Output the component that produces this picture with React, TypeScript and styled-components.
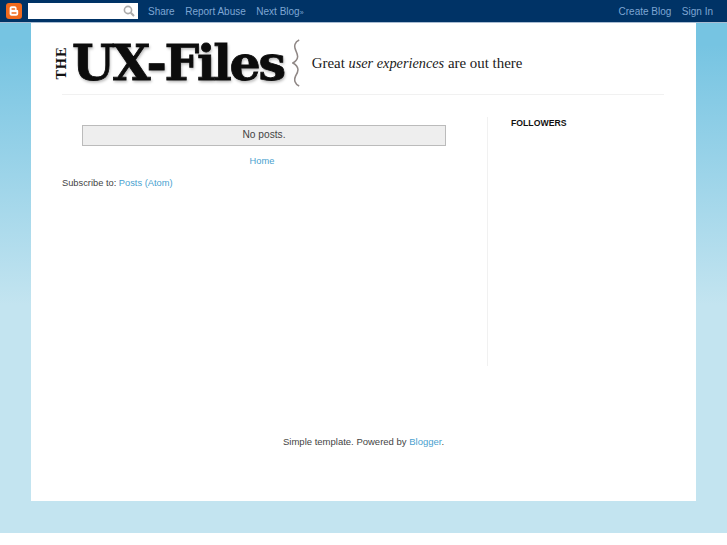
import React from 'react';
import styled, { createGlobalStyle } from 'styled-components';

const GlobalStyle = createGlobalStyle`
  html, body {
    margin: 0;
    padding: 0;
    background: #fff;
  }
  body {
    font-family: "Liberation Sans", Arial, sans-serif;
    font-size: 9.3px;
    color: #444;
  }
  a {
    color: #4a9fcf;
    text-decoration: none;
  }
`;

const Page = styled.div`
  width: 727px;
  height: 533px;
  overflow: hidden;
  background: linear-gradient(#76c4e2 45px, #c3e4f0 305px);
`;

const Navbar = styled.nav`
  height: 22px;
  border-bottom: 1px solid #a9bcd2;
  background: #003366;
  display: flex;
  align-items: center;
  padding: 0 14px 0 6px;
  font-size: 10px;
`;

const NavLink = styled.a`
  color: #7ea6d3;
  margin-left: 10.5px;
`;

const NavSearch = styled.div`
  width: 109.5px;
  height: 16px;
  margin-left: 6px;
  background: #fff;
  display: flex;
  align-items: center;
  justify-content: flex-end;
  padding-right: 3px;
  box-sizing: border-box;
`;

const NavSpacer = styled.div`
  flex: 1;
`;

const Arrows = styled.span`
  font-size: 7px;
`;

const Card = styled.main`
  width: 665px;
  height: 478px;
  margin-left: 31px;
  background: #fff;
  box-sizing: border-box;
  padding: 11px 32px 0 23px;
`;

const Logo = styled.header`
  display: flex;
  align-items: center;
  height: 60px;
  white-space: nowrap;
`;

const LogoThe = styled.span`
  writing-mode: vertical-rl;
  transform: rotate(180deg);
  font-family: "DejaVu Serif", serif;
  font-weight: 700;
  font-size: 12.5px;
  line-height: 15px;
  letter-spacing: 0.6px;
  color: #111;
  margin: -1px 3px 0 0;
`;

const LogoTitle = styled.h1`
  margin: -3px 0 0 0;
  font-family: "DejaVu Serif", serif;
  font-weight: 700;
  font-size: 49px;
  line-height: 60px;
  letter-spacing: -2.3px;
  color: #0c0c0c;
  -webkit-text-stroke: 0.8px #0c0c0c;
  text-shadow: 1px 2px 3px rgba(0, 0, 0, 0.3);
`;

const Brace = styled.svg`
  margin: -2px 0 0 8px;
  flex: none;
`;

const Tagline = styled.p`
  margin: -2px 0 0 11px;
  font-family: "Liberation Serif", serif;
  font-size: 14.9px;
  color: #1a1a1a;

  em {
    font-size: 14.3px;
  }
`;

const Rule = styled.hr`
  margin: 0 0 0 8px;
  height: 1px;
  border: 0;
  background: #f1f1f1;
`;

const Columns = styled.div`
  display: flex;
  margin-top: 22px;
  height: 249px;
`;

const PostsColumn = styled.section`
  width: 433px;
  padding-left: 8px;
  box-sizing: border-box;
`;

const Status = styled.div`
  width: 364px;
  height: 21px;
  margin: 8px 0 0 20px;
  box-sizing: border-box;
  background: #eeeeee;
  border: 1px solid #bbbbbb;
  text-align: center;
  font-size: 10.2px;
  line-height: 17px;
`;

const Pager = styled.div`
  width: 400px;
  text-align: center;
  margin-top: 9px;
  line-height: 13px;
`;

const Subscribe = styled.div`
  margin-top: 9px;
  line-height: 13px;
`;

const Sidebar = styled.aside`
  flex: 1;
  border-left: 1px solid #f1f1f1;
  padding-left: 23px;
`;

const SidebarTitle = styled.h2`
  margin: 0;
  font-size: 8.7px;
  line-height: 13px;
  color: #111;
  text-transform: uppercase;
`;

const Footer = styled.footer`
  margin-top: 69px;
  padding-left: 229px;
  font-size: 9.5px;
  line-height: 13px;
`;

const App: React.FC = () => {
  return (
    <Page>
      <GlobalStyle />
      <Navbar>
        <svg width="16" height="16" viewBox="0 0 16 16">
          <rect width="16" height="16" rx="3" fill="#f06a1d" />
          <path
            d="M5.6 3.2h3c1.1 0 2 .9 2 2v1.3c0 .4.3.6.6.6.6 0 1 .4 1 1v2.7c0 1.1-.9 2-2 2H5.6c-1.1 0-2-.9-2-2V5.2c0-1.1.9-2 2-2z"
            fill="#fff"
          />
          <path d="M6 6h2.6M6 10h4" stroke="#f06a1d" strokeWidth="1.3" strokeLinecap="round" />
        </svg>
        <NavSearch>
          <svg width="12" height="12" viewBox="0 0 12 12" fill="none" stroke="#aaa" strokeWidth="1.6">
            <circle cx="5" cy="5" r="3.6" />
            <path d="M7.8 7.8 11 11" strokeWidth="2" />
          </svg>
        </NavSearch>
        <NavLink href="#">Share</NavLink>
        <NavLink href="#">Report Abuse</NavLink>
        <NavLink href="#">
          Next Blog<Arrows>»</Arrows>
        </NavLink>
        <NavSpacer />
        <NavLink href="#">Create Blog</NavLink>
        <NavLink href="#">Sign In</NavLink>
      </Navbar>
      <Card>
        <Logo>
          <LogoThe>THE</LogoThe>
          <LogoTitle>UX-Files</LogoTitle>
          <Brace
            width="9"
            height="48"
            viewBox="0 0 10 48"
            preserveAspectRatio="none"
            fill="none"
            stroke="#8f8785"
            strokeWidth="1.7"
          >
            <path d="M8 1C3 3 2 7 4 11c2 4 5 9-3 13 8 4 6 9 3 13-2 4-1 8 4 10" />
          </Brace>
          <Tagline>
            Great <em>user experiences</em> are out there
          </Tagline>
        </Logo>
        <Rule />
        <Columns>
          <PostsColumn>
            <Status>No posts.</Status>
            <Pager>
              <a href="#">Home</a>
            </Pager>
            <Subscribe>
              Subscribe to: <a href="#">Posts (Atom)</a>
            </Subscribe>
          </PostsColumn>
          <Sidebar>
            <SidebarTitle>Followers</SidebarTitle>
          </Sidebar>
        </Columns>
        <Footer>
          Simple template. Powered by <a href="#">Blogger</a>.
        </Footer>
      </Card>
    </Page>
  );
};

export default App;
